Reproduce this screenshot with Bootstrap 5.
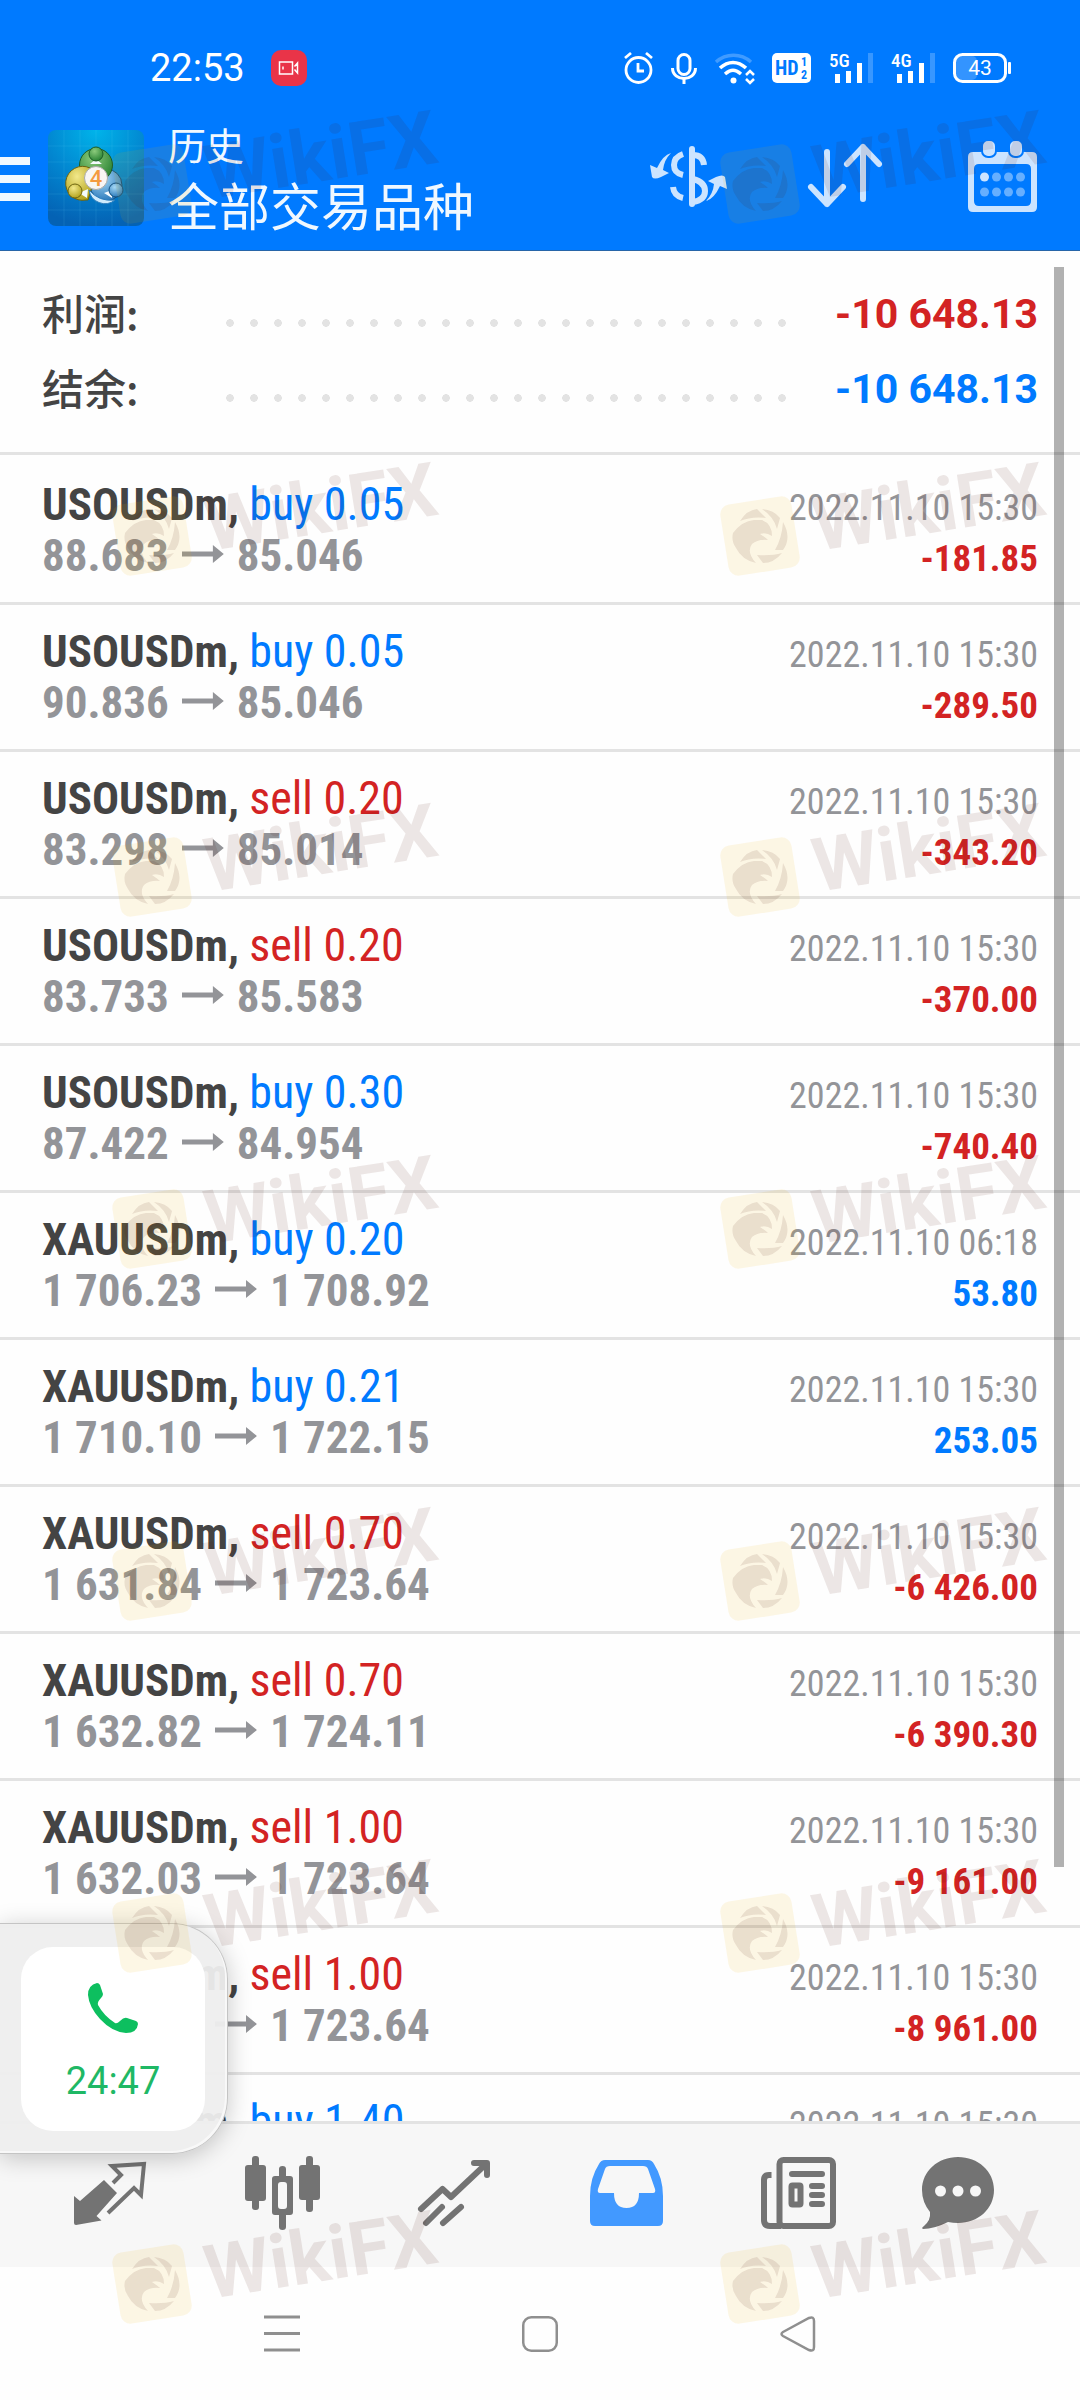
<!DOCTYPE html>
<html lang="zh-CN">
<head>
<meta charset="utf-8">
<meta name="viewport" content="width=device-width, initial-scale=1">
<title>历史</title>
<link href="https://cdn.jsdelivr.net/npm/bootstrap@5.3.0/dist/css/bootstrap.min.css" rel="stylesheet">
<style>
  :root { --mt-blue: #007aff; --mt-red: #d32323; --mt-gray: #939498; --mt-dark: #444; --mt-line: #e3e3e3; }
  body { font-family: Roboto, "Noto Sans CJK SC", sans-serif; background: #fefefe; color: var(--mt-dark); }
  svg { display: block; flex: none; overflow: visible; }
  .bare { border: 0; padding: 0; background: none; color: inherit; }

  .topbar { background: var(--mt-blue); color: #fff; border-bottom: 1px solid #2765a8; padding-bottom: 14px; }
  .statusbar { padding: 48px 69px 0 150px; height: 88px; }
  .clock { font-size: 38px; line-height: 40px; margin-right: 26px; }
  .recbadge { width: 36px; height: 36px; border-radius: 10px; background: #e93448; }
  .statusicons { gap: 18px; }
  .appbar { padding: 28px 43px 0 0; }
  .menubtn { width: 30px; gap: 10px; margin-right: 18px; padding-top: 5px; }
  .menubtn span { height: 8px; background: #f0f8ff; }
  .applogo { margin-top: 4px; }
  .titles { margin-left: 24px; font-family: "Noto Sans CJK SC", sans-serif; font-weight: 400; color: #f0f8ff; }
  .t-small { font-size: 38px; line-height: 56px; }
  .t-big { font-size: 51px; line-height: 64px; }
  .tools { gap: 80px; color: #cce4ff; }
  .tools button:nth-child(2) { margin-right: 6px; }

  .summary { padding: 26px 42px 25px; border-bottom: 3px solid var(--mt-line); }
  .sumrow { height: 75px; line-height: 75px; font-size: 41px; font-weight: 700; }
  .sumlabel { width: 176px; font-family: "Noto Sans CJK SC", sans-serif; font-size: 42px; font-weight: 500; line-height: 70px; }
  .leader { background: radial-gradient(circle 4px at 12px 46px, #e3e3e3 90%, transparent) repeat-x 0 0 / 24px 75px; height: 75px; max-width: 576px; }
  .c-red { color: var(--mt-red); }
  .c-blue { color: var(--mt-blue); }

  .deals { flex: 1 1 0; padding-top: 3px; min-height: 0; }
  .deal { padding: 21px 42px; border-bottom: 3px solid var(--mt-line); font-family: "Roboto Condensed", Roboto, sans-serif; }
  .ln { height: 51px; line-height: 51px; font-size: 45px; }
  .side { font-size: 46px; }
  .sym, .price { font-weight: 700; }
  .price { color: var(--mt-gray); }
  .arr { display: inline-block; width: 42px; height: 18px; margin: 0 13px; vertical-align: 8px; background: var(--mt-gray); clip-path: polygon(0 36%, 74% 36%, 74% 0, 100% 50%, 74% 100%, 74% 64%, 0 64%); }
  .when, .val { line-height: 36px; }
  .when { font-size: 36px; color: var(--mt-gray); }
  .val { font-size: 37px; font-weight: 700; }

  .thumb { right: 16px; top: 267px; width: 10px; height: 1600px; background: rgba(0,0,0,.3); }

  .tabs { background: #f7f7f7; border-top: 3px solid var(--mt-line); padding: 0 48px 0 24px; color: #737373; }
  .tabs a { flex: 1 1 0; height: 143px; padding-bottom: 5px; color: inherit; }
  .tabs a:last-child { flex-grow: .86; }
  .tabs a.active { color: #4299ff; }
  .sysnav { height: 133px; padding: 0 153px; color: #8f8f8f; }
  .sysnav button { flex: 1 1 0; }

  .callbox { left: 0; bottom: 246px; padding: 23px 22px 22px 21px; background: rgba(238,238,238,.95); border: 1px solid #c4c4c4; border-left: 0; border-radius: 0 56px 56px 0; box-shadow: inset -2px -2px 0 #f8f8f8, 0 4px 24px rgba(0,0,0,.22); }
  .callcard { width: 184px; height: 184px; border-radius: 32px; background: #fff; color: #0dbf5f; padding-top: 36px; }
  .calltime { font-size: 38px; line-height: 56px; color: #1fb865; margin-top: 20px; }

  .wmlayer { inset: 0; pointer-events: none; z-index: 5; }
</style>
</head>
<body>
<div class="vh-100 d-flex flex-column position-relative overflow-hidden">

  <header class="topbar flex-shrink-0">
    <div class="statusbar d-flex align-items-center">
      <span class="clock">22:53</span>
      <span class="recbadge d-flex align-items-center justify-content-center">
        <svg width="22" height="14" fill="none" stroke="#fff" stroke-width="1.5"><path d="M1.500 1h13v12h-13zM16.500 5.500l3-3.500v10l-3-3.500M5 5.500v3"/></svg>
      </span>
      <div class="statusicons d-flex align-items-center ms-auto">
        <svg width="29" height="32" viewBox="0 0 29 32" fill="none" stroke="#fff" stroke-width="2.800"><circle cx="14.500" cy="18" r="12.500"/><path d="M14 11v8h6M1 6l6-5M28 6l-6-5"/></svg>
        <svg width="26" height="31" viewBox="0 0 26 31" fill="none" stroke="#fff" stroke-width="3"><rect x="7" y="1.500" width="12" height="20" rx="6"/><path d="M1.500 15c0 14 23 14 23 0M13 25v6"/></svg>
        <svg width="39" height="31" viewBox="0 0 39 31" fill="none" stroke="#fff" stroke-width="3.500"><path d="M1 9C11 0 26 0 36 9" opacity=".25"/><path d="M5 15C13 7.500 23 7.500 31 15M10 21c6-5 10-5 16 0"/><circle cx="18.500" cy="27.500" r="3" fill="#fff" stroke="none"/><path d="M31 22l4-4 4 4M31 26l4 4 4-4" stroke-width="2.500"/></svg>
        <svg width="39" height="30" viewBox="0 0 39 30"><rect width="39" height="30" rx="5" fill="#fff"/><g fill="#007aff" font-family="Roboto Condensed, sans-serif" font-weight="700"><text x="3" y="22" font-size="20">HD</text><text x="29" y="13" font-size="12">1</text><text x="29" y="26" font-size="12">2</text></g></svg>
        <svg width="44" height="30" viewBox="0 0 44 30" fill="#fff"><text x="0" y="14" font-size="19" font-weight="500" font-family="Roboto Condensed, sans-serif">5G</text><rect x="6" y="21" width="5" height="9"/><rect x="17" y="18" width="5" height="12"/><rect x="28" y="10" width="5" height="20"/><rect x="39" width="5" height="30" opacity=".22"/></svg>
        <svg width="44" height="30" viewBox="0 0 44 30" fill="#fff"><text x="0" y="14" font-size="19" font-weight="500" font-family="Roboto Condensed, sans-serif">4G</text><rect x="6" y="21" width="5" height="9"/><rect x="17" y="18" width="5" height="12"/><rect x="28" y="10" width="5" height="20"/><rect x="39" width="5" height="30" opacity=".22"/></svg>
        <svg width="58" height="30" viewBox="0 0 58 30"><rect x="3" y="3" width="21" height="24" rx="5" fill="#fff" opacity=".2"/><rect x="1.500" y="1.500" width="51" height="27" rx="8" fill="none" stroke="#fff" stroke-width="3"/><rect x="55" y="9" width="3" height="12" rx="1" fill="#fff"/><text x="27" y="22" font-size="21" text-anchor="middle" fill="#fff" font-family="Roboto, sans-serif">43</text></svg>
      </div>
    </div>
    <div class="appbar d-flex align-items-center">
      <button type="button" class="menubtn bare d-flex flex-column" aria-label="菜单"><span class="w-100"></span><span class="w-100"></span><span class="w-100"></span></button>
      <svg class="applogo" width="96" height="96" viewBox="0 0 96 96">
        <defs>
          <radialGradient id="tile" cx=".5" cy="0" r="1"><stop offset="0" stop-color="#00b4ea"/><stop offset=".55" stop-color="#0284cf"/><stop offset="1" stop-color="#0462b4"/></radialGradient>
          <radialGradient id="gg" cx=".4" cy=".3" r=".8"><stop offset="0" stop-color="#8ccb7c"/><stop offset="1" stop-color="#1f7a2b"/></radialGradient>
          <radialGradient id="gy" cx=".4" cy=".3" r=".8"><stop offset="0" stop-color="#f2e88a"/><stop offset="1" stop-color="#ab9a10"/></radialGradient>
          <radialGradient id="gb" cx=".4" cy=".3" r=".8"><stop offset="0" stop-color="#a5d8f5"/><stop offset="1" stop-color="#1c6eb4"/></radialGradient>
        </defs>
        <rect width="96" height="96" rx="8" fill="url(#tile)"/>
        <path d="M0 16h96M0 32h96M0 48h96M0 64h96M0 80h96M16 0v96M32 0v96M48 0v96M64 0v96M80 0v96" stroke="#7fd4ff" stroke-opacity=".12"/>
        <g stroke-width="1">
          <circle cx="58" cy="55" r="16" fill="url(#gb)" stroke="#14507f"/>
          <circle cx="48" cy="35" r="16.500" fill="url(#gg)" stroke="#1b5c26"/>
          <path d="M38 70a17 17 0 1 1 4-32l4 12-6 20z" fill="url(#gy)" stroke="#6e6410"/>
          <path d="M41 60q10 12 26 10a16 16 0 0 1-26-10z" fill="#cdeafc" stroke="#2b7dbd"/>
          <path d="M42 34l6-5 6 5zM31 63l9-4-1 9zM56 63l8-3 0 8z" fill="#f4fbff" stroke="none"/>
          <circle cx="48" cy="24" r="7" fill="url(#gg)" stroke="#1b5c26"/>
          <circle cx="27" cy="61" r="7" fill="url(#gy)" stroke="#6e6410"/>
          <circle cx="68" cy="60" r="7" fill="url(#gb)" stroke="#14507f"/>
          <circle cx="48" cy="48" r="11.500" fill="#f8f6f4" stroke="#aaa"/>
        </g>
        <text x="48" y="56" font-size="22" font-weight="500" text-anchor="middle" fill="#f49a3f" font-family="Roboto, sans-serif">4</text>
      </svg>
      <div class="titles flex-fill">
        <div class="t-small">历史</div>
        <h1 class="t-big m-0 fw-normal">全部交易品种</h1>
      </div>
      <div class="tools d-flex align-items-center">
        <button type="button" class="bare" aria-label="交易品种">
          <svg width="79" height="61" viewBox="0 0 79 61" fill="none" stroke="currentColor" stroke-width="6"><path d="M43 3v55" stroke-linecap="round"/><path d="M34 8q-9 3-9 11 0 8 9 10M24 41q1 9 10 11M44 9q10 0 11 10" /><path d="M44 33q12 3 12 12 0 9-12 11" /><path id="swing" d="M22 7Q14 9 8 22L1 19 3 31Q5 34 12 31L20 27 14 24Q15 14 22 7Z" fill="currentColor" stroke="none"/><use href="#swing" transform="rotate(180 39.500 31)"/></svg>
        </button>
        <button type="button" class="bare" aria-label="排序">
          <svg width="74" height="64" viewBox="0 0 74 64" fill="none" stroke="currentColor" stroke-width="6" stroke-linecap="round" stroke-linejoin="round"><path d="M19 8v52M3 43l16 17 16-17M55 55V3M39 20L55 3l16 17"/></svg>
        </button>
        <button type="button" class="bare" aria-label="日期">
          <svg width="69" height="71" viewBox="0 0 69 71" fill="currentColor"><path fill-rule="evenodd" d="M5 11h59q5 0 5 5v50q0 5-5 5H5q-5 0-5-5V16q0-5 5-5zM11 23q-5 0-5 5v32q0 5 5 5h47q5 0 5-5V28q0-5-5-5z"/><g stroke="#007aff" stroke-width="2"><rect x="14" y="-1" width="14" height="17" rx="6"/><rect x="41" y="-1" width="14" height="17" rx="6"/></g><circle cx="16.500" cy="36" r="4.500"/><g fill="#66afff"><circle cx="28.500" cy="36" r="4.500"/><circle cx="40.500" cy="36" r="4.500"/><circle cx="52.500" cy="36" r="4.500"/><circle cx="16.500" cy="51" r="4.500"/><circle cx="28.500" cy="51" r="4.500"/><circle cx="40.500" cy="51" r="4.500"/><circle cx="52.500" cy="51" r="4.500"/></g></svg>
        </button>
      </div>
    </div>
  </header>

  <section class="summary flex-shrink-0">
    <div class="sumrow d-flex"><span class="sumlabel">利润:</span><span class="leader flex-fill"></span><span class="c-red ms-auto">-10 648.13</span></div>
    <div class="sumrow d-flex"><span class="sumlabel">结余:</span><span class="leader flex-fill"></span><span class="c-blue ms-auto">-10 648.13</span></div>
  </section>

  <ul class="deals list-unstyled m-0 overflow-hidden">
    <li class="deal">
      <div class="ln d-flex justify-content-between align-items-baseline"><span><span class="sym">USOUSDm,</span> <span class="side c-blue">buy 0.05</span></span><span class="when">2022.11.10 15:30</span></div>
      <div class="ln d-flex justify-content-between align-items-baseline"><span class="price">88.683<i class="arr"></i>85.046</span><span class="val c-red">-181.85</span></div>
    </li>
    <li class="deal">
      <div class="ln d-flex justify-content-between align-items-baseline"><span><span class="sym">USOUSDm,</span> <span class="side c-blue">buy 0.05</span></span><span class="when">2022.11.10 15:30</span></div>
      <div class="ln d-flex justify-content-between align-items-baseline"><span class="price">90.836<i class="arr"></i>85.046</span><span class="val c-red">-289.50</span></div>
    </li>
    <li class="deal">
      <div class="ln d-flex justify-content-between align-items-baseline"><span><span class="sym">USOUSDm,</span> <span class="side c-red">sell 0.20</span></span><span class="when">2022.11.10 15:30</span></div>
      <div class="ln d-flex justify-content-between align-items-baseline"><span class="price">83.298<i class="arr"></i>85.014</span><span class="val c-red">-343.20</span></div>
    </li>
    <li class="deal">
      <div class="ln d-flex justify-content-between align-items-baseline"><span><span class="sym">USOUSDm,</span> <span class="side c-red">sell 0.20</span></span><span class="when">2022.11.10 15:30</span></div>
      <div class="ln d-flex justify-content-between align-items-baseline"><span class="price">83.733<i class="arr"></i>85.583</span><span class="val c-red">-370.00</span></div>
    </li>
    <li class="deal">
      <div class="ln d-flex justify-content-between align-items-baseline"><span><span class="sym">USOUSDm,</span> <span class="side c-blue">buy 0.30</span></span><span class="when">2022.11.10 15:30</span></div>
      <div class="ln d-flex justify-content-between align-items-baseline"><span class="price">87.422<i class="arr"></i>84.954</span><span class="val c-red">-740.40</span></div>
    </li>
    <li class="deal">
      <div class="ln d-flex justify-content-between align-items-baseline"><span><span class="sym">XAUUSDm,</span> <span class="side c-blue">buy 0.20</span></span><span class="when">2022.11.10 06:18</span></div>
      <div class="ln d-flex justify-content-between align-items-baseline"><span class="price">1 706.23<i class="arr"></i>1 708.92</span><span class="val c-blue">53.80</span></div>
    </li>
    <li class="deal">
      <div class="ln d-flex justify-content-between align-items-baseline"><span><span class="sym">XAUUSDm,</span> <span class="side c-blue">buy 0.21</span></span><span class="when">2022.11.10 15:30</span></div>
      <div class="ln d-flex justify-content-between align-items-baseline"><span class="price">1 710.10<i class="arr"></i>1 722.15</span><span class="val c-blue">253.05</span></div>
    </li>
    <li class="deal">
      <div class="ln d-flex justify-content-between align-items-baseline"><span><span class="sym">XAUUSDm,</span> <span class="side c-red">sell 0.70</span></span><span class="when">2022.11.10 15:30</span></div>
      <div class="ln d-flex justify-content-between align-items-baseline"><span class="price">1 631.84<i class="arr"></i>1 723.64</span><span class="val c-red">-6 426.00</span></div>
    </li>
    <li class="deal">
      <div class="ln d-flex justify-content-between align-items-baseline"><span><span class="sym">XAUUSDm,</span> <span class="side c-red">sell 0.70</span></span><span class="when">2022.11.10 15:30</span></div>
      <div class="ln d-flex justify-content-between align-items-baseline"><span class="price">1 632.82<i class="arr"></i>1 724.11</span><span class="val c-red">-6 390.30</span></div>
    </li>
    <li class="deal">
      <div class="ln d-flex justify-content-between align-items-baseline"><span><span class="sym">XAUUSDm,</span> <span class="side c-red">sell 1.00</span></span><span class="when">2022.11.10 15:30</span></div>
      <div class="ln d-flex justify-content-between align-items-baseline"><span class="price">1 632.03<i class="arr"></i>1 723.64</span><span class="val c-red">-9 161.00</span></div>
    </li>
    <li class="deal">
      <div class="ln d-flex justify-content-between align-items-baseline"><span><span class="sym">XAUUSDm,</span> <span class="side c-red">sell 1.00</span></span><span class="when">2022.11.10 15:30</span></div>
      <div class="ln d-flex justify-content-between align-items-baseline"><span class="price">1 632.03<i class="arr"></i>1 723.64</span><span class="val c-red">-8 961.00</span></div>
    </li>
    <li class="deal">
      <div class="ln d-flex justify-content-between align-items-baseline"><span><span class="sym">XAUUSDm,</span> <span class="side c-blue">buy 1.40</span></span><span class="when">2022.11.10 15:30</span></div>
    </li>
  </ul>

  <nav class="tabs d-flex flex-shrink-0">
    <a href="#quotes" aria-label="行情" class="d-flex align-items-center justify-content-center">
      <svg width="72" height="63" viewBox="0 0 72 63"><path d="M30 18L43 31 22.500 54 27.500 58.500 2 63Q0 63 0 61V34L6 39Z" fill="currentColor"/><path d="M39 21L47 13 38 4 70 2 67 33 60 26 34 51" fill="none" stroke="currentColor" stroke-width="4"/></svg>
    </a>
    <a href="#chart" aria-label="图表" class="d-flex align-items-center justify-content-center">
      <svg width="75" height="74" viewBox="0 0 75 74" fill="currentColor"><rect y="9" width="21" height="36" rx="3"/><rect x="7" width="7" height="54" rx="3"/><rect x="54" y="9" width="21" height="35" rx="3"/><rect x="61" width="7" height="56" rx="3"/><path fill-rule="evenodd" d="M34 20V13q0-3 3.500-3t3.500 3v7h4q3 0 3 3v33q0 3-3 3h-4v12q0 3-3.500 3T34 71V59h-4q-3 0-3-3V23q0-3 3-3zM33 29v21q0 3 3 3h3q3 0 3-3V29q0-3-3-3h-3q-3 0-3 3z"/></svg>
    </a>
    <a href="#trade" aria-label="交易" class="d-flex align-items-center justify-content-center">
      <svg width="72" height="66" viewBox="0 0 72 66" fill="none" stroke="currentColor" stroke-width="6" stroke-linecap="round" stroke-linejoin="round"><path d="M3 49L24.500 29 33 37 68 4M56 3H69V15"/><path d="M24 47L8 63M43 47L25 63"/></svg>
    </a>
    <a href="#history" aria-label="历史" aria-current="page" class="active d-flex align-items-center justify-content-center">
      <svg width="73" height="66" viewBox="0 0 73 66" fill="currentColor"><path fill-rule="evenodd" d="M15 0H58Q62 0 64 4 73 18 73 36V61Q73 66 68 66H5Q0 66 0 61V36Q0 18 9 4 11 0 15 0ZM20 6Q16 6 15 9L8 29Q7 33 10 33H24Q24 48 36.500 48 49 48 49 33H63Q66 33 65 29L58 9Q57 6 53 6Z"/></svg>
    </a>
    <a href="#news" aria-label="新闻" class="d-flex align-items-center justify-content-center">
      <svg width="75" height="72" viewBox="0 0 75 72" fill="none" stroke="currentColor" stroke-width="6"><rect x="18.500" y="3" width="53.500" height="66" rx="4"/><path d="M10.500 18H8Q3 18 3 23V63Q3 69 9 69H20"/><path d="M31 17H61M51 29H61M51 38H61M51 47H61" stroke-linecap="round"/><rect x="30.500" y="28.500" width="9" height="19" rx="1"/></svg>
    </a>
    <a href="#messages" aria-label="消息" class="d-flex align-items-center justify-content-center">
      <svg width="72" height="72" viewBox="0 0 72 72" fill="currentColor"><path d="M36 0C56 0 72 14 72 33S56 66 36 66Q31 66 26 65 12 72 1 72-1 71 2 69 9 63 8 55 0 45 0 33C0 14 16 0 36 0Z"/><g fill="#f7f7f7"><circle cx="18.500" cy="34" r="5.500"/><circle cx="36" cy="34" r="5.500"/><circle cx="53.500" cy="34" r="5.500"/></g></svg>
    </a>
  </nav>

  <div class="sysnav d-flex flex-shrink-0">
    <button type="button" class="bare d-flex align-items-center justify-content-center" aria-label="最近任务"><svg width="36" height="37" viewBox="0 0 36 37" stroke="currentColor" stroke-width="3"><path d="M0 2h36M0 18.500h36M0 35h36"/></svg></button>
    <button type="button" class="bare d-flex align-items-center justify-content-center" aria-label="主屏幕"><svg width="36" height="36" viewBox="0 0 36 36" fill="none" stroke="currentColor" stroke-width="2.500"><rect x="1.250" y="1.250" width="33.500" height="33.500" rx="8"/></svg></button>
    <button type="button" class="bare d-flex align-items-center justify-content-center" aria-label="返回"><svg width="36" height="36" viewBox="0 0 36 36" fill="none" stroke="currentColor" stroke-width="2.500"><path d="M3 16L29 2Q34 0 34 5V31Q34 36 29 34L3 20Q0 18 3 16Z"/></svg></button>
  </div>

  <div class="thumb position-absolute"></div>

  <div class="callbox position-absolute">
    <div class="callcard d-flex flex-column align-items-center">
      <svg width="50" height="50" viewBox="0 0 50 50" fill="currentColor"><path d="M9 0Q11 0 12 2L15 11Q15 13 13 15 9 19 10 22 16 33 27 40 29 41 32 38 36 34 39 35L48 38Q50 39 50 41 49 50 38 50 24 49 12 36 1 24 0 12 0 2 9 0Z"/></svg>
      <div class="calltime">24:47</div>
    </div>
  </div>

  <svg class="wmlayer position-absolute w-100 h-100" aria-hidden="true">
    <defs>
      <g id="wm">
        <rect x="-36" y="-36" width="72" height="72" rx="10" fill="#f0b400" fill-opacity=".1" transform="rotate(-9)"/>
        <g fill="#4b140a" fill-opacity=".1">
          <path d="M-20-15Q-13-26-3-27L6-18Q-8-20-20-15Z"/>
          <path d="M2-27Q14-26 20-18L17-7Q14-19 2-27Z"/>
          <path d="M23-14Q32 2 23 14L15 14Q22 2 23-14Z"/>
          <path d="M-3 19Q12 20 22 17 14 27 3 27Z"/>
          <path d="M-27-3Q-18-15-6-16L2-16Q12-12 12 0 6-4 0-2 6 2 8 4-2 3-8 8-14 16-4 27-18 24-24 12-29 5-27-3Z"/>
          <text x="0" y="0" font-family="Roboto, sans-serif" font-weight="700" font-size="75" transform="translate(57 15) rotate(-9)">WikiFX</text>
        </g>
      </g>
    </defs>
    <use href="#wm" x="152" y="184"/><use href="#wm" x="760" y="184"/>
    <use href="#wm" x="152" y="536"/><use href="#wm" x="760" y="536"/>
    <use href="#wm" x="152" y="877"/><use href="#wm" x="760" y="877"/>
    <use href="#wm" x="152" y="1229"/><use href="#wm" x="760" y="1229"/>
    <use href="#wm" x="152" y="1581"/><use href="#wm" x="760" y="1581"/>
    <use href="#wm" x="152" y="1933"/><use href="#wm" x="760" y="1933"/>
    <use href="#wm" x="152" y="2284"/><use href="#wm" x="760" y="2284"/>
  </svg>
</div>
<script src="https://cdn.jsdelivr.net/npm/bootstrap@5.3.0/dist/js/bootstrap.bundle.min.js"></script>
</body>
</html>
